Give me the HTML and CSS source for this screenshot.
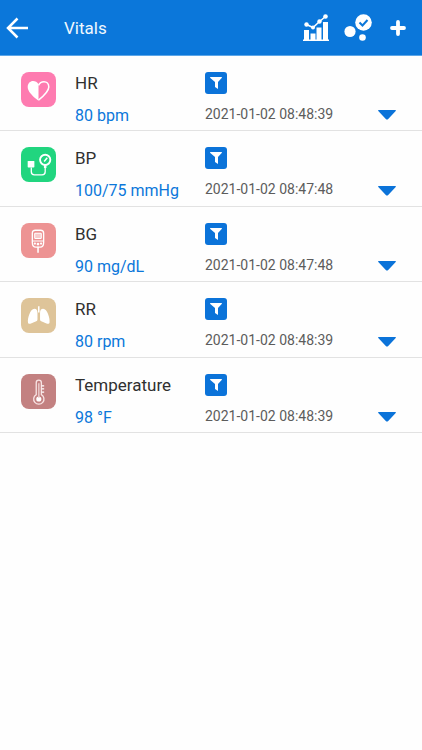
FILE: index.html
```html
<!DOCTYPE html>
<html lang="en">
<head>
<meta charset="utf-8">
<meta name="viewport" content="width=device-width, initial-scale=1">
<title>Vitals</title>
<link rel="stylesheet" href="styles.css">
</head>
<body>
<svg class="defs" aria-hidden="true">
  <symbol id="funnel" viewBox="0 0 22 22"><path d="M5.500 5h11c.5 0 .5.7.2 1L13 10v7l-3-2v-5L5.300 6c-.3-.3-.3-1 .2-1z" fill="#fff"/></symbol>
  <symbol id="caret" viewBox="0 0 18 10"><path d="M.8 0h16.400c.8 0 1 .6.500 1.100L10.200 9q-1.200 1.200-2.400 0L.3 1.100C-.2.600 0 0 .8 0z" fill="#0b73d9"/></symbol>
</svg>
<header class="bar">
  <button class="bar-btn" aria-label="Back">
    <svg width="24" height="24" viewBox="0 0 24 24" fill="none" stroke="#fff" stroke-width="2.500"><path d="M23 12H3M12.500 2.500L3 12l9.500 9.500"/></svg>
  </button>
  <h1 class="bar-title">Vitals</h1>
  <nav class="bar-actions">
    <button class="bar-btn" aria-label="Charts">
      <svg width="28" height="28" viewBox="0 0 28 28" fill="#fff"><path d="M1 25.500h26V27H1zM2 16h5v10H2zM8.500 19.500h5V26h-5zM14.500 13.500h5V26h-5zM21 8h5v18h-5z"/><path d="M4.500 10.500l6.500 3 6.500-6 6-5" fill="none" stroke="#fff" stroke-width="1.500"/><circle cx="4.500" cy="10.500" r="2.200"/><circle cx="11" cy="13.500" r="2"/><circle cx="17.500" cy="7.500" r="2.200"/><circle cx="23.500" cy="2.500" r="2.300"/></svg>
    </button>
    <button class="bar-btn" aria-label="Status">
      <svg width="28" height="28" viewBox="0 0 28 28" fill="#fff"><circle cx="6" cy="17.500" r="5.600"/><circle cx="18.500" cy="23.500" r="3.300"/><circle cx="19.500" cy="8.500" r="8.300"/><path d="M15.500 8.500l3 3 5-5.500" fill="none" stroke="#0b77da" stroke-width="2"/></svg>
    </button>
    <button class="bar-btn" aria-label="Add">
      <svg width="16" height="16" viewBox="0 0 16 16" fill="none" stroke="#fff" stroke-width="3.800" stroke-linecap="round"><path d="M8 2v12M2 8h12"/></svg>
    </button>
  </nav>
</header>
<main>
<ul class="list">
  <li class="row">
    <svg class="tile pink" viewBox="0 0 34 34"><path d="M17 28C10 22.500 6.500 18.500 6.500 14.500c0-3.500 2.500-5.700 5.200-5.700 2.200 0 4 1.100 5.300 3.200z" fill="#fff"/><path d="M17 27.300c6.500-5.300 10-9 10-12.800 0-3.100-2.100-5-4.700-5-2.200 0-4.200 1.200-5.300 3.500" fill="none" stroke="#fff" stroke-width="1.500"/></svg>
    <div class="vital"><h2 class="name">HR</h2><p class="value">80 bpm</p></div>
    <div class="log"><button class="filter" aria-label="Filter HR"><svg width="22" height="22"><use href="#funnel"/></svg></button><time class="time">2021-01-02 08:48:39</time></div>
    <button class="more" aria-label="Expand HR"><svg width="18" height="10"><use href="#caret"/></svg></button>
  </li>
  <li class="row">
    <svg class="tile green" viewBox="0 0 34 34"><rect x="6.500" y="13.500" width="6.500" height="6.500" rx=".7" fill="#fff"/><g fill="none" stroke="#fff"><path d="M10 20v4q0 3 3 3h7.500q3 0 3-3v-7" stroke-width="1.300"/><circle cx="23.500" cy="12.500" r="5" stroke-width="1.800"/><path d="M22.500 14l3-3.500" stroke-width="1.500"/><path d="M23.500 17.500v3" stroke-width="2.500"/></g></svg>
    <div class="vital"><h2 class="name">BP</h2><p class="value">100/75 mmHg</p></div>
    <div class="log"><button class="filter" aria-label="Filter BP"><svg width="22" height="22"><use href="#funnel"/></svg></button><time class="time">2021-01-02 08:47:48</time></div>
    <button class="more" aria-label="Expand BP"><svg width="18" height="10"><use href="#caret"/></svg></button>
  </li>
  <li class="row">
    <svg class="tile coral" viewBox="0 0 34 34"><path d="M11 10q0-3 3-3h5q3 0 3 3v9q0 4.500-3.500 4.500h-4Q11 23.500 11 19z" fill="none" stroke="#fff" stroke-width="1.300"/><rect x="13.300" y="10" width="6.400" height="5" rx=".7" fill="#f7cccc" stroke="#fff"/><g fill="#fff"><circle cx="13.500" cy="20" r="1.100"/><circle cx="16.500" cy="20.500" r="1.300"/><circle cx="19.500" cy="20" r="1.100"/><path d="M11.500 17h10v1h-10zM15.800 23h1.500v6h-1.500z"/></g></svg>
    <div class="vital"><h2 class="name">BG</h2><p class="value">90 mg/dL</p></div>
    <div class="log"><button class="filter" aria-label="Filter BG"><svg width="22" height="22"><use href="#funnel"/></svg></button><time class="time">2021-01-02 08:47:48</time></div>
    <button class="more" aria-label="Expand BG"><svg width="18" height="10"><use href="#caret"/></svg></button>
  </li>
  <li class="row">
    <svg class="tile sand" viewBox="0 0 34 34"><g fill="#fff"><path d="M13 10.500c2 0 3 1.500 3 4v6.500c0 2-2 2-3.500 2.500-2 .8-5.200 2.800-5.700.5-.7-4 2.200-13.500 6.200-13.500zM21.500 10.500c-2 0-3 1.500-3 4v6.500c0 2 2 2 3.500 2.500 2 .8 5.200 2.800 5.700.5.700-4-2.200-13.500-6.200-13.500z"/><path d="M16.500 8h1.500v6h-1.500z"/></g></svg>
    <div class="vital"><h2 class="name">RR</h2><p class="value">80 rpm</p></div>
    <div class="log"><button class="filter" aria-label="Filter RR"><svg width="22" height="22"><use href="#funnel"/></svg></button><time class="time">2021-01-02 08:48:39</time></div>
    <button class="more" aria-label="Expand RR"><svg width="18" height="10"><use href="#caret"/></svg></button>
  </li>
  <li class="row">
    <svg class="tile brick" viewBox="0 0 34 34"><path d="M14.800 20V8.500q0-2.500 2.500-2.500t2.500 2.500V20a5 5 0 1 1-5 0z" fill="none" stroke="#f8e3e3" stroke-width="1.300"/><circle cx="17.300" cy="24.300" r="2.500" fill="#fff"/><path d="M17.300 9v14" stroke="#e8c8c8" stroke-width="1.500"/><path d="M20 11.500h2.500M20 14.500h2.500M20 17.500h2.500" stroke="#fff" stroke-width="1.200"/></svg>
    <div class="vital"><h2 class="name">Temperature</h2><p class="value">98 °F</p></div>
    <div class="log"><button class="filter" aria-label="Filter temperature"><svg width="22" height="22"><use href="#funnel"/></svg></button><time class="time">2021-01-02 08:48:39</time></div>
    <button class="more" aria-label="Expand temperature"><svg width="18" height="10"><use href="#caret"/></svg></button>
  </li>
</ul>
</main>
</body>
</html>
```
FILE: styles.css
```css
* { box-sizing: border-box; }
body { margin: 0; background: #fefefe; color: #303030; font-family: Roboto, sans-serif; }
h1, h2, p, ul { margin: 0; padding: 0; font-weight: 400; }
button { display: flex; padding: 0; border: 0; background: none; cursor: pointer; }
svg { display: block; flex: none; }
.defs { display: none; }

.bar { display: flex; align-items: center; height: 56px; padding: 0 16px 0 5px; background: #0b77da; border-bottom: 1px solid #5ca6e8; }
.bar-title { margin-left: 35px; color: #f0f7fe; font-size: 17px; line-height: 24px; }
.bar-actions { display: flex; align-items: center; gap: 14px; margin-left: auto; }
.bar-actions .bar-btn:last-child { margin-left: 4px; }

.list { display: grid; grid-auto-rows: 1fr; min-height: 377px; list-style: none; }
.row { display: grid; grid-template-columns: 34px 130px 1fr 18px; padding: 16px 26px 0 21px; border-bottom: 1px solid #e2e2e2; }
.tile { width: 35px; height: 35px; border-radius: 8px; }
.pink { background: #fe7bb0; }
.green { background: #21d57f; }
.coral { background: #ed9393; }
.sand { background: #dec499; }
.brick { background: #c38181; }
.vital { padding-left: 20px; white-space: nowrap; }
.name { font-size: 17px; line-height: 22px; }
.value { margin-top: 10px; color: #0b77da; font-size: 16px; line-height: 24px; }
.log { padding-left: 20px; }
.filter { width: 22px; height: 22px; border-radius: 3px; background: #0b73d9; }
.time { display: block; margin-top: 10px; color: #5c5c5c; font-size: 14px; line-height: 20px; white-space: nowrap; }
.more { align-self: end; margin-bottom: 10px; }
```
